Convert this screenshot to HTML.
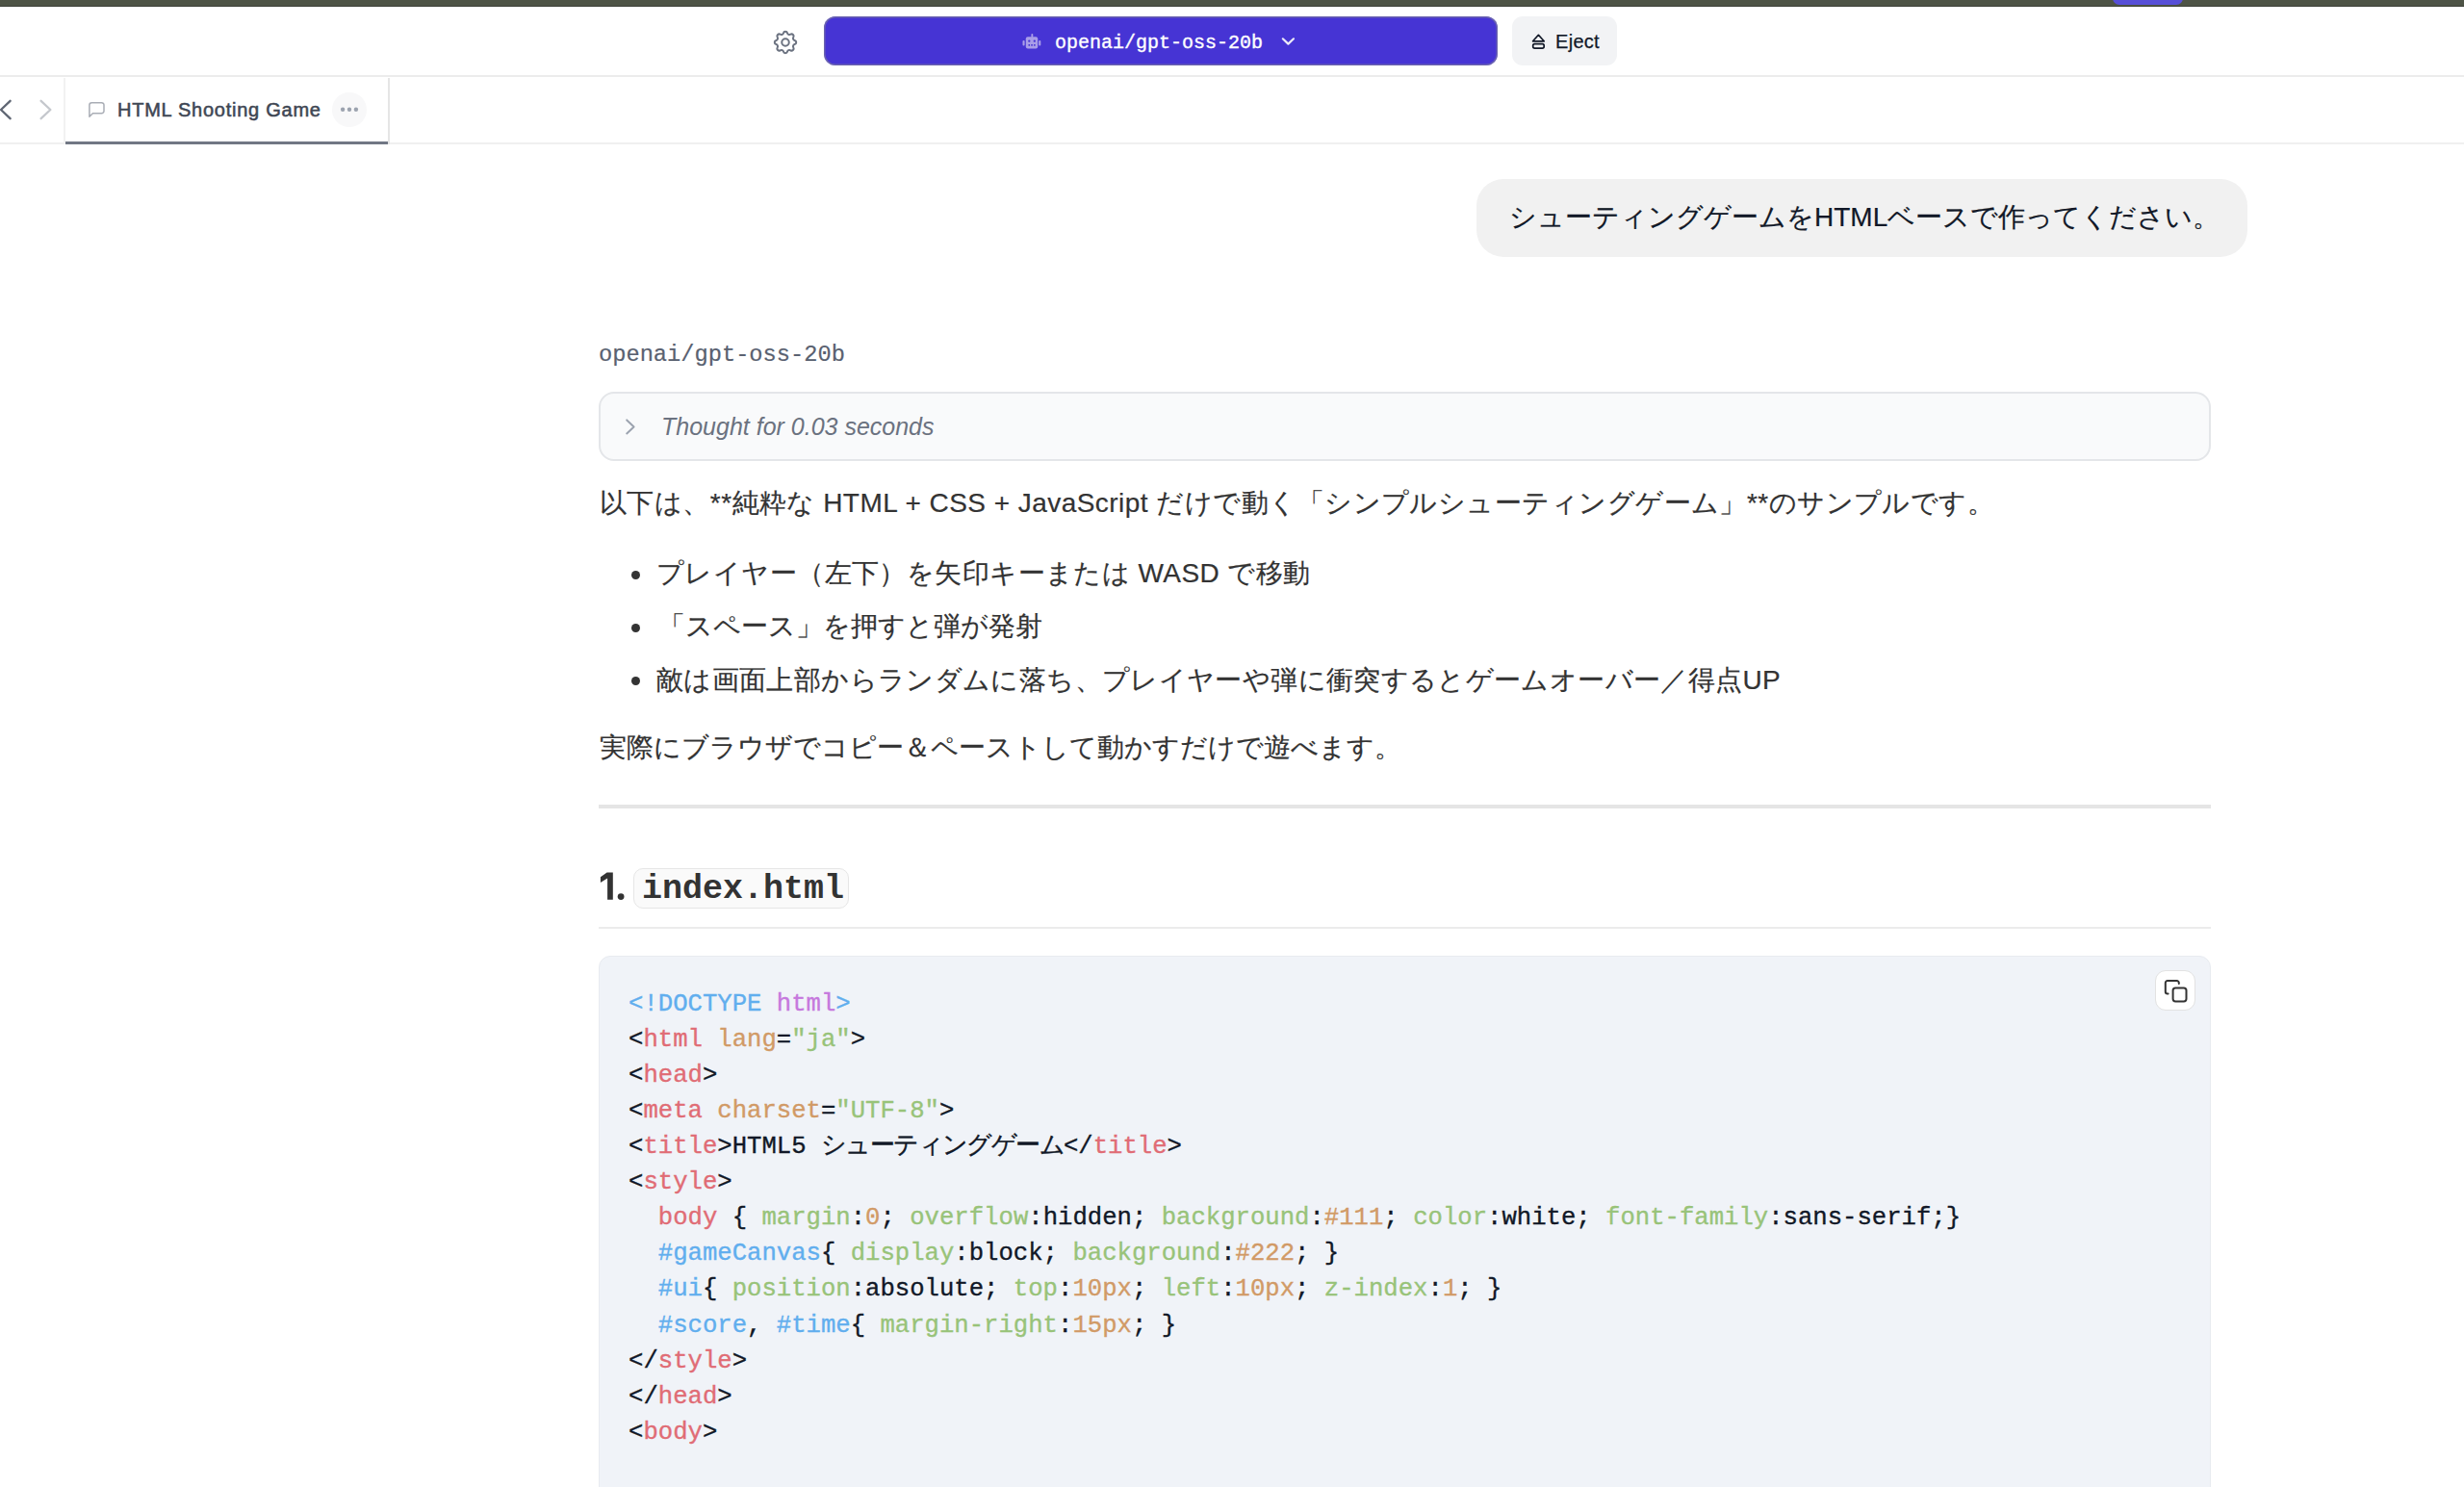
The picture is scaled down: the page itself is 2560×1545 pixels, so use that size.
<!DOCTYPE html>
<html lang="ja">
<head>
<meta charset="UTF-8">
<style>
html,body{margin:0;padding:0;}
body{width:2560px;height:1545px;overflow:hidden;background:#fff;position:relative;font-family:"Liberation Sans",sans-serif;color:#333;}
.abs{position:absolute;}
#strip{left:0;top:0;width:2560px;height:6px;background:#4e5446;border-bottom:1px solid #3d4139;}
#strip .pill{position:absolute;left:2195px;top:-10px;width:73px;height:15px;background:#574fd8;border-radius:7px;}
#hdr{left:0;top:7px;width:2560px;height:71px;background:#fff;border-bottom:2px solid #ececec;box-sizing:content-box;}
#gear{left:803px;top:31px;width:25px;height:25px;}
#model{left:856px;top:17px;width:700px;height:51px;background:#4634d4;border-radius:12px;box-shadow:inset 0 0 0 1.5px rgba(130,130,150,0.6);}
#model .txt{position:absolute;left:240px;top:1.5px;line-height:51px;-webkit-text-stroke:0.35px #fff;font-family:"Liberation Mono",monospace;font-size:20px;color:#fff;}
#eject{left:1571px;top:17px;width:109px;height:51px;background:#f2f3f5;border-radius:11px;}
#eject .txt{position:absolute;left:45px;top:1px;line-height:51px;font-size:20px;letter-spacing:0.3px;-webkit-text-stroke:0.25px #111827;color:#111827;}
#tabrow{left:0;top:80px;width:2560px;height:68px;border-bottom:2px solid #f0f0f0;}
#tab{left:66px;top:81px;width:335px;height:69px;border-left:2px solid #f2f2f2;border-right:2px solid #e5e5e5;}
#tabline{left:68px;top:147px;width:335px;height:3px;background:#717784;}
#tabtitle{left:122px;top:98px;line-height:32px;font-size:20px;font-weight:normal;-webkit-text-stroke:0.55px #3f4754;letter-spacing:0.75px;color:#3f4754;}
#dots{left:345px;top:96px;width:36px;height:36px;border-radius:50%;background:#f8f8f9;}
#bubble{left:1534px;top:186px;width:801px;height:81px;background:#f1f1f1;border-radius:28px;}
#bubble .txt{position:absolute;left:34px;top:-1px;line-height:81px;font-size:28px;color:#111827;white-space:nowrap;-webkit-text-stroke:0.2px #111827;}
#mlabel{left:622px;top:350.5px;line-height:36px;font-family:"Liberation Mono",monospace;font-size:23.7px;color:#596170;-webkit-text-stroke:0.2px #596170;}
#thought{left:622px;top:407px;width:1671px;height:68px;border:2px solid #e4e6e9;background:#f9fafb;border-radius:16px;}
#thought .txt{position:absolute;left:63px;top:0;line-height:68px;font-size:25px;font-style:italic;color:#6b7280;}
.p{left:623px;font-size:28px;line-height:40px;color:#333;white-space:nowrap;-webkit-text-stroke:0.2px #333;}
.li{left:682px;font-size:28px;line-height:40px;color:#333;white-space:nowrap;-webkit-text-stroke:0.2px #333;}
.bul{width:9px;height:9px;border-radius:50%;background:#333;left:656px;}
#hr{left:622px;top:836px;width:1675px;height:4px;background:#e5e5e5;}
#h2line{left:622px;top:963px;width:1675px;height:2px;background:#ebebeb;}
#code{left:622px;top:993px;width:1673px;height:600px;background:#f0f3f8;border:1px solid #e8ebf0;border-radius:12px;}
#copy{left:2239px;top:1008px;width:40px;height:40px;background:#fff;border:1.5px solid #e2e2e2;border-radius:11px;}
pre{margin:0;position:absolute;left:653px;top:1024.8px;-webkit-text-stroke-width:0.35px;font-family:"Liberation Mono",monospace;font-size:25.64px;line-height:37.08px;color:#111827;}
.t{color:#e06c75}.a{color:#d19a66}.s{color:#98c379}.b{color:#61aeee}.k{color:#c678dd}
#icode{left:658px;top:902px;width:222px;height:40px;background:#fafafa;border:1.5px solid #e6e6e6;border-radius:10px;}
#icode span{position:absolute;left:8px;top:0;line-height:42px;font-family:"Liberation Mono",monospace;font-size:35px;font-weight:bold;color:#333;}
</style>
</head>
<body>
<div id="strip" class="abs"><div class="pill"></div></div>
<div id="hdr" class="abs"></div>
<div id="model" class="abs"><span class="txt">openai/gpt-oss-20b</span></div>
<div id="eject" class="abs"><span class="txt">Eject</span></div>
<div id="tabrow" class="abs"></div>
<div id="tab" class="abs"></div>
<div id="tabline" class="abs"></div>
<div id="tabtitle" class="abs">HTML Shooting Game</div>
<div id="dots" class="abs"></div>
<div id="bubble" class="abs"><span class="txt">シューティングゲームをHTMLベースで作ってください。</span></div>
<div id="mlabel" class="abs">openai/gpt-oss-20b</div>
<div id="thought" class="abs"><span class="txt">Thought for 0.03 seconds</span></div>
<div class="abs p" style="top:503px;letter-spacing:0.46px">以下は、**純粋な HTML + CSS + JavaScript だけで動く「シンプルシューティングゲーム」**のサンプルです。</div>
<div class="abs bul" style="top:593px"></div>
<div class="abs li" style="top:576px;letter-spacing:0.43px">プレイヤー（左下）を矢印キーまたは WASD で移動</div>
<div class="abs bul" style="top:648px"></div>
<div class="abs li" style="top:631px;left:684px">「スペース」を押すと弾が発射</div>
<div class="abs bul" style="top:703px"></div>
<div class="abs li" style="top:687px;letter-spacing:0.37px">敵は画面上部からランダムに落ち、プレイヤーや弾に衝突するとゲームオーバー／得点UP</div>
<div class="abs p" style="top:757px">実際にブラウザでコピー＆ペーストして動かすだけで遊べます。</div>
<div id="hr" class="abs"></div>
<div id="h2line" class="abs"></div>
<div id="code" class="abs"></div>
<div id="copy" class="abs"></div>
<svg class="abs" style="left:800.5px;top:28.5px" width="30" height="30" viewBox="0 0 24 24" fill="none" stroke="#6b7280" stroke-width="1.6" stroke-linecap="round" stroke-linejoin="round"><path d="M10.325 4.317c.426 -1.756 2.924 -1.756 3.35 0a1.724 1.724 0 0 0 2.573 1.066c1.543 -.94 3.31 .826 2.37 2.37a1.724 1.724 0 0 0 1.065 2.572c1.756 .426 1.756 2.924 0 3.35a1.724 1.724 0 0 0 -1.066 2.573c.94 1.543 -.826 3.31 -2.37 2.37a1.724 1.724 0 0 0 -2.572 1.065c-.426 1.756 -2.924 1.756 -3.35 0a1.724 1.724 0 0 0 -2.573 -1.066c-1.543 .94 -3.31 -.826 -2.37 -2.37a1.724 1.724 0 0 0 -1.065 -2.572c-1.756 -.426 -1.756 -2.924 0 -3.35a1.724 1.724 0 0 0 1.066 -2.573c-.94 -1.543 .826 -3.31 2.37 -2.37c1 .608 2.296 .07 2.572 -1.065z"/><circle cx="12" cy="12" r="3"/></svg>
<svg class="abs" style="left:1060px;top:33px" width="24" height="20" viewBox="1060 33 24 20"><g fill="#a99ee8"><rect x="1065.8" y="38.2" width="12.4" height="12.2" rx="2"/><rect x="1071.4" y="35" width="1.9" height="4" rx="0.9"/><rect x="1062.5" y="42" width="2.1" height="5.6" rx="1"/><rect x="1079.2" y="42" width="2.1" height="5.6" rx="1"/></g><g fill="#4634d4"><circle cx="1069.3" cy="42.7" r="1.15"/><circle cx="1074.8" cy="42.7" r="1.15"/><rect x="1068.5" y="46" width="1.5" height="1.7"/><rect x="1071.3" y="46" width="1.5" height="1.7"/><rect x="1074.1" y="46" width="1.5" height="1.7"/></g></svg>
<svg class="abs" style="left:1328px;top:35px" width="20" height="16" viewBox="1328 35 20 16"><polyline points="1332.8,40.3 1338.4,45.6 1344,40.3" fill="none" stroke="#eceaf8" stroke-width="2.2" stroke-linecap="round" stroke-linejoin="round"/></svg>
<svg class="abs" style="left:1588px;top:32px" width="20" height="22" viewBox="1588 32 20 22"><g fill="none" stroke="#111827" stroke-width="1.7" stroke-linejoin="round"><path d="M1598.4 36.3 L1604.2 42.8 H1592.6 Z"/><rect x="1592.7" y="45.6" width="11.5" height="4.5" rx="1.8"/></g></svg>
<svg class="abs" style="left:0;top:100px" width="60" height="28" viewBox="0 100 60 28"><polyline points="10.6,104.8 1,114 10.6,123.2" fill="none" stroke="#5f6673" stroke-width="2.3" stroke-linecap="round" stroke-linejoin="round"/><polyline points="42.6,104.8 52.4,114 42.6,123.2" fill="none" stroke="#c5c8cd" stroke-width="2.3" stroke-linecap="round" stroke-linejoin="round"/></svg>
<svg class="abs" style="left:88px;top:102px" width="24" height="24" viewBox="88 102 24 24"><path d="M92.9 121.2 V109.1 a2.4 2.4 0 0 1 2.4 -2.4 H105.6 a2.4 2.4 0 0 1 2.4 2.4 V115.3 a2.4 2.4 0 0 1 -2.4 2.4 H96.4 Z" fill="none" stroke="#a9adb5" stroke-width="1.5" stroke-linejoin="round"/></svg>
<svg class="abs" style="left:345px;top:96px" width="36" height="36" viewBox="345 96 36 36"><g fill="#9ca3af"><circle cx="356.1" cy="113.8" r="2.2"/><circle cx="363" cy="113.8" r="2.2"/><circle cx="369.9" cy="113.8" r="2.2"/></g></svg>
<svg class="abs" style="left:645px;top:430px" width="20" height="26" viewBox="645 430 20 26"><polyline points="651.2,436.4 658.6,443.4 651.2,450.4" fill="none" stroke="#9ca3af" stroke-width="2" stroke-linecap="round" stroke-linejoin="round"/></svg>
<svg class="abs" style="left:2244px;top:1014px" width="32" height="32" viewBox="2244 1014 32 32"><g fill="none" stroke="#333" stroke-width="2" stroke-linecap="round" stroke-linejoin="round"><path d="M2252.6 1032.4 H2252 a2.2 2.2 0 0 1 -2.2 -2.2 V1021.2 a2.2 2.2 0 0 1 2.2 -2.2 H2261.6 a2.2 2.2 0 0 1 2.2 2.2 V1021.9"/><rect x="2257.6" y="1026.5" width="13.9" height="13.9" rx="2.6"/></g></svg>
<svg class="abs" style="left:620px;top:902px" width="32" height="36" viewBox="620 902 32 36"><g fill="#333"><path d="M630.6 906.6 H636.8 V934.8 H631.1 V912.6 L623.9 917 V911.2 Z"/><circle cx="645.1" cy="931.6" r="3.4"/></g></svg>
<div class="abs" id="icode"><span>index.html</span></div>
<pre><span class="b">&lt;!DOCTYPE</span> <span class="k">html</span><span class="b">&gt;</span>
&lt;<span class="t">html</span> <span class="a">lang</span>=<span class="s">"ja"</span>&gt;
&lt;<span class="t">head</span>&gt;
&lt;<span class="t">meta</span> <span class="a">charset</span>=<span class="s">"UTF-8"</span>&gt;
&lt;<span class="t">title</span>&gt;HTML5 <span style="letter-spacing:-1.6px">シューティングゲーム</span>&lt;/<span class="t">title</span>&gt;
&lt;<span class="t">style</span>&gt;
  <span class="t">body</span> { <span class="s">margin</span>:<span class="a">0</span>; <span class="s">overflow</span>:hidden; <span class="s">background</span>:<span class="a">#111</span>; <span class="s">color</span>:white; <span class="s">font-family</span>:sans-serif;}
  <span class="b">#gameCanvas</span>{ <span class="s">display</span>:block; <span class="s">background</span>:<span class="a">#222</span>; }
  <span class="b">#ui</span>{ <span class="s">position</span>:absolute; <span class="s">top</span>:<span class="a">10px</span>; <span class="s">left</span>:<span class="a">10px</span>; <span class="s">z-index</span>:<span class="a">1</span>; }
  <span class="b">#score</span>, <span class="b">#time</span>{ <span class="s">margin-right</span>:<span class="a">15px</span>; }
&lt;/<span class="t">style</span>&gt;
&lt;/<span class="t">head</span>&gt;
&lt;<span class="t">body</span>&gt;
</pre>
</body>
</html>
